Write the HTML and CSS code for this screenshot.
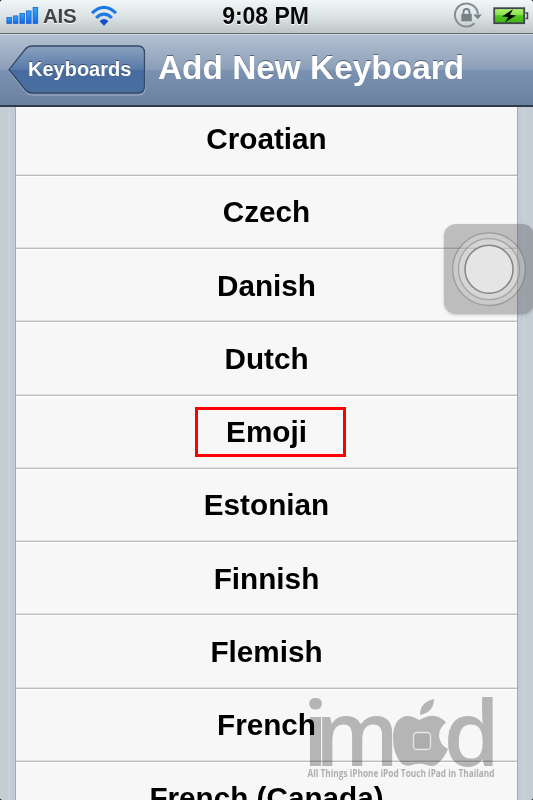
FILE: index.html
```html
<!DOCTYPE html>
<html lang="en">
<head>
<meta charset="utf-8">
<title>Add New Keyboard</title>
<link rel="stylesheet" href="styles.css">
</head>
<body>
<div class="phone">
  <header class="status">
    <div class="carrier">
      <svg class="signal" width="33" height="19" viewBox="0 0 33 19">
        <defs><linearGradient id="blue" x1="0" y1="0" x2="0" y2="1"><stop offset="0" stop-color="#2faaf8"/><stop offset="1" stop-color="#1765e8"/></linearGradient></defs>
        <g fill="url(#blue)" stroke="#1d62cf" stroke-width=".8">
          <rect x=".9" y="11.4" width="4.6" height="6"/><rect x="7.3" y="9.9" width="4.6" height="7.5"/><rect x="13.9" y="7.4" width="4.6" height="10"/><rect x="20.5" y="4.9" width="4.6" height="12.5"/><rect x="27.1" y="1.4" width="4.6" height="16"/>
        </g>
      </svg>
      <span class="network">AIS</span>
      <svg class="wifi" width="28" height="22" viewBox="0 0 28 22">
        <g fill="none" stroke="#1c78e6" stroke-width="3">
          <path d="M2 8.2Q14 -3.4 26 8.2"/><path d="M6.2 12.8Q14 5.400 21.800 12.800"/>
        </g>
        <path d="M9.600 16.200Q14 11.600 18.400 16.200L14 20.800Z" fill="#1551cf"/>
      </svg>
    </div>
    <div class="time">9:08 PM</div>
    <div class="indicators">
      <svg width="29" height="27" viewBox="0 0 29 27">
        <path d="M21.500 21.200A11.500 11.500 0 1 1 24.900 12" fill="none" stroke="#848e91" stroke-width="2"/>
        <path d="M20.300 12.500H29L24.700 17.200Z" fill="#778285"/>
        <rect x="8.300" y="11.900" width="10.500" height="7.400" fill="#778285"/>
        <path d="M10.500 12.500V10a3 3 0 0 1 6 0V12.500" fill="none" stroke="#778285" stroke-width="1.800"/>
      </svg>
      <svg class="battery" width="36" height="20" viewBox="0 0 36 20">
        <defs><linearGradient id="green" x1="0" y1="0" x2="0" y2="1"><stop offset="0" stop-color="#b5f27c"/><stop offset=".42" stop-color="#8ce44d"/><stop offset=".5" stop-color="#50c51d"/><stop offset="1" stop-color="#3fb50f"/></linearGradient></defs>
        <rect x="1.200" y="2.200" width="30" height="15" fill="url(#green)" stroke="#40464e" stroke-width="1.800"/>
        <path d="M32.500 7h2v5.500h-2" fill="none" stroke="#40464e" stroke-width="1.500"/>
        <path d="M20 3.200L9 10.500l6.200 .6-3.200 5.400L23 9.400l-6-.7z" fill="#050a04"/>
      </svg>
    </div>
  </header>
  <nav class="navbar">
    <div class="back">
      <svg class="back-shape" width="139" height="52" viewBox="0 0 139 52">
        <defs><linearGradient id="btn" x1="0" y1="0" x2="0" y2="1"><stop offset="0" stop-color="#8ba1bf"/><stop offset=".5" stop-color="#577aa9"/><stop offset=".51" stop-color="#476b9f"/><stop offset="1" stop-color="#496e9f"/></linearGradient></defs>
        <path d="M24 2.500H130Q137 2.500 137 9.500V43.500Q137 50 130 50H24Q20 50 17 46.500L1 26.200 17 6Q20 2.500 24 2.500Z" fill="none" stroke="#b2c2d6" stroke-opacity=".75" stroke-width="1"/>
        <path d="M24 1H130Q136.500 1 136.500 8V41Q136.500 48 130 48H24Q20 48 17 44.500L1 24.700 17 4.500Q20 1 24 1Z" fill="url(#btn)" stroke="#354a69" stroke-width="1.300"/>
      </svg>
      <span class="back-label">Keyboards</span>
    </div>
    <h1 class="title">Add New Keyboard</h1>
  </nav>
  <main class="content">
    <ul class="list">
      <li>Croatian</li>
      <li>Czech</li>
      <li>Danish</li>
      <li>Dutch</li>
      <li>Emoji<span class="highlight"></span></li>
      <li>Estonian</li>
      <li>Finnish</li>
      <li>Flemish</li>
      <li>French</li>
      <li>French (Canada)</li>
    </ul>
  </main>
  <div class="assistive">
    <svg width="90" height="91" viewBox="0 0 90 91">
      <g fill="#fff" fill-opacity=".22" stroke="#666" stroke-opacity=".42" stroke-width="1.300">
        <circle cx="45" cy="45.200" r="36.300"/><circle cx="45" cy="45.200" r="30.500"/>
      </g>
      <circle cx="45" cy="45.200" r="24" fill="#e6e6e6" fill-opacity=".93" stroke="#858585" stroke-width="1.500"/>
    </svg>
  </div>
  <svg class="watermark" width="200" height="92" viewBox="0 0 200 92">
    <g class="brand">
      <text x="-3" y="72" textLength="27" lengthAdjust="spacingAndGlyphs">i</text>
      <text x="10" y="72" textLength="84" lengthAdjust="spacingAndGlyphs">m</text>
      <text x="138.500" y="72" textLength="56.500" lengthAdjust="spacingAndGlyphs">d</text>
    </g>
    <path d="M114 26Q119 23.500 124 22Q134 20.500 141 28.500Q134 34 134 42Q135 51 143 55Q139 65 131 71Q127 73 122 71Q114 68.500 107 71Q102 73 97 70Q88 61 88 44Q88 25 101 22Q107 21.500 114 26ZM115 21Q115 8 129 5Q129 18 115 21Z" fill="#bbb"/>
    <rect x="108.500" y="38.500" width="17" height="17" rx="3.500" fill="#b3b3b3" stroke="#eee" stroke-width="1.300"/>
    <text class="tagline" x="2.500" y="83" textLength="187" lengthAdjust="spacingAndGlyphs">All Things iPhone iPod Touch iPad in Thailand</text>
  </svg>
</div>
</body>
</html>
```
FILE: styles.css
```css
* { box-sizing: border-box; }
body { margin: 0; background: #000; font-family: "Liberation Sans", Arial, sans-serif; font-weight: bold; }
.phone { position: relative; width: 533px; height: 800px; overflow: hidden; border-radius: 3px; display: flex; flex-direction: column; background: #c5ccd4; }

.status { height: 34px; flex: none; display: grid; grid-template-columns: 1fr auto 1fr; align-items: center; background: linear-gradient(#f1f7f9, #dce3e5 50%, #bec5c6); border-bottom: 1px solid #646c72; }
.carrier { display: flex; align-items: center; padding: 0 0 2px 6px; color: #424242; font-size: 20.5px; }
.network { margin-left: 4px; letter-spacing: -.3px; text-shadow: 0 1px #fff; }
.wifi { margin-left: 14px; }
.time { padding-right: 2px; font-size: 23px; letter-spacing: -.05px; color: #080808; text-shadow: 0 1px #fff; }
.indicators { display: flex; justify-content: flex-end; align-items: center; gap: 11px; padding: 0 4px 2px 0; }

.navbar { height: 73px; flex: none; display: flex; padding: 11px 0 0 8px; background: linear-gradient(#b3c0d1, #8c9fb9 49%, #7c92b1 50%, #6b81a2); border-top: 1px solid #ced5df; border-bottom: 2px solid #2f3a4b; color: #fff; white-space: nowrap; }
.back { position: relative; width: 139px; height: 52px; padding: 12px 0 0 20px; font-size: 20px; line-height: 23px; text-shadow: 0 -1px #344a6b; }
.back-shape { position: absolute; left: 0; top: -1px; }
.back-label { position: relative; }
.title { margin: 3px 0 0 11px; font-size: 33.4px; line-height: 38px; text-shadow: 0 -1.5px #56657b; }

.content { flex: 1; min-height: 0; overflow: hidden; padding: 0 15px; background: linear-gradient(90deg, #c4ccd4 0 8px, #c8d0d9 8px 10px, #c3cbd6 10px 523px, #c8d0d9 523px 525px, #c4ccd4 525px); }
.list { list-style: none; margin: -4.5px 0 0; padding: 0; border: solid #a1aab5; border-width: 0 1.5px; background: #f7f7f7; }
.list li { position: relative; height: 73.25px; display: flex; align-items: center; justify-content: center; padding-top: 1px; border-bottom: 1px solid #bcbcbe; box-shadow: inset 0 1px #fff, inset 0 -1px #e0e0e1; font-size: 29.7px; line-height: 36px; color: #000; }
.highlight { position: absolute; left: 179px; top: 11px; width: 151px; height: 50px; border: 3px solid #f00; }

.assistive { position: absolute; left: 444px; top: 224px; width: 90px; height: 90px; border-radius: 12px; background: rgba(75, 75, 75, .34); box-shadow: 0 1px 3px rgba(0, 0, 0, .2); }
.watermark { position: absolute; left: 305px; top: 694px; overflow: visible; mix-blend-mode: multiply; }
.brand { font: 600 90px "Open Sans", sans-serif; fill: #bbb; }
.tagline { font: 700 10.5px "Open Sans", sans-serif; fill: #b4b4b4; }
```
